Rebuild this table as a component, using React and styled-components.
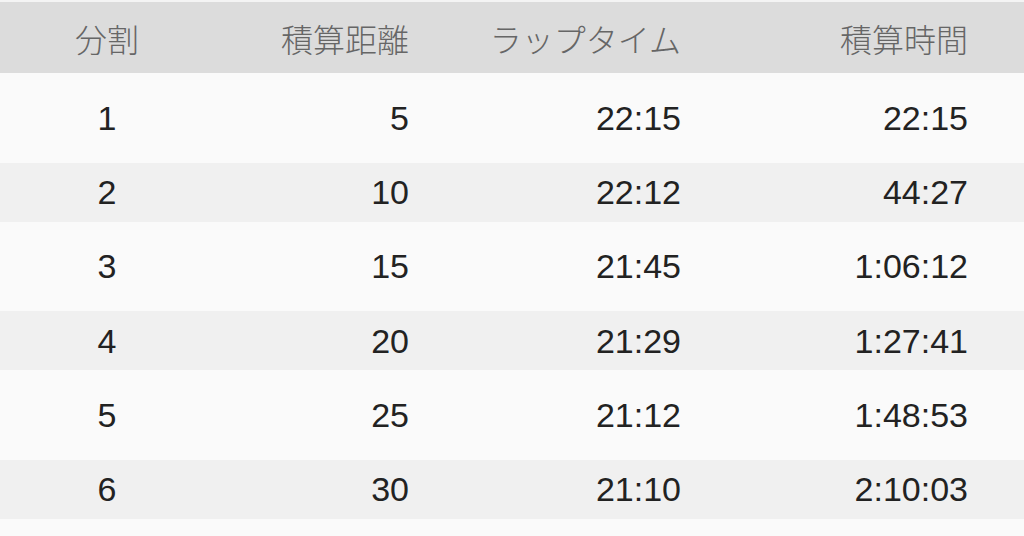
import React from "react";
import styled, { createGlobalStyle } from "styled-components";

const GlobalStyle = createGlobalStyle`
  html, body {
    margin: 0;
    padding: 0;
    background: #fafafa;
  }
  body {
    font-family: "Liberation Sans", "Noto Sans CJK JP", sans-serif;
  }
`;

// 分割ごとの記録
const splits = [
  { no: 1, dist: 5, lap: "22:15", total: "22:15" },
  { no: 2, dist: 10, lap: "22:12", total: "44:27" },
  { no: 3, dist: 15, lap: "21:45", total: "1:06:12" },
  { no: 4, dist: 20, lap: "21:29", total: "1:27:41" },
  { no: 5, dist: 25, lap: "21:12", total: "1:48:53" },
  { no: 6, dist: 30, lap: "21:10", total: "2:10:03" },
];

export default function App() {
  return (
    <>
      <GlobalStyle />
      <Table>
        <Header>
          <Cell $center>分割</Cell>
          <Cell>積算距離</Cell>
          <Cell>ラップタイム</Cell>
          <Cell>積算時間</Cell>
        </Header>
        {splits.map((s, i) => (
          <Row key={s.no} $odd={i % 2 === 1}>
            <Cell $center>{s.no}</Cell>
            <Cell>{s.dist}</Cell>
            <Cell>{s.lap}</Cell>
            <Cell>{s.total}</Cell>
          </Row>
        ))}
        <Spacer />
      </Table>
    </>
  );
}

const Table = styled.div`
  width: 1024px;
  height: 536px;
  overflow: hidden;
  display: flex;
  flex-direction: column;
  background: #fafafa;
`;

const columns = `
  display: grid;
  grid-template-columns: 214px 195px 272px 287px;
  padding-right: 56px;
  align-items: center;
`;

const Header = styled.div`
  ${columns}
  flex: none;
  height: 71px;
  border-top: 2px solid #f4f4f4;
  background: #dcdcdc;
  color: #666;
  font-family: "Noto Sans CJK JP", sans-serif;
  font-weight: 300;
  font-size: 32px;
`;

const Row = styled.div`
  ${columns}
  flex: none;
  height: ${(p) => (p.$odd ? "59px" : "89.5px")};
  background: ${(p) => (p.$odd ? "#f0f0f0" : "#fafafa")};
  color: #222;
  font-size: 34px;
`;

const Cell = styled.div`
  text-align: ${(p) => (p.$center ? "center" : "right")};
  white-space: nowrap;
  line-height: 1;
`;

const Spacer = styled.div`
  flex: 1;
  background: #fafafa;
`;
